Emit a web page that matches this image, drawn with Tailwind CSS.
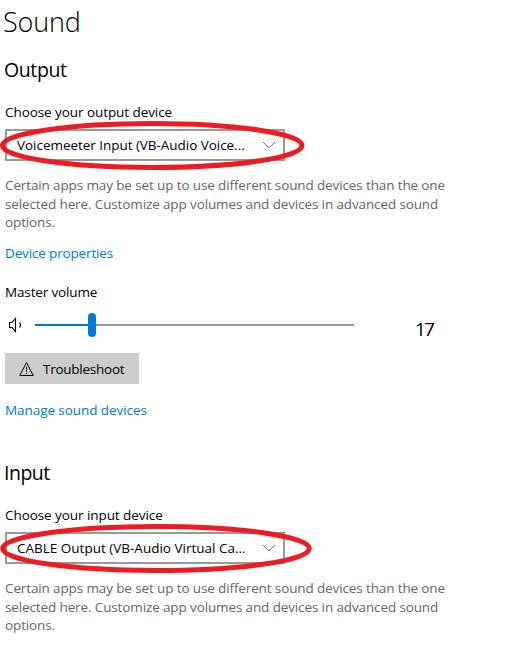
<!DOCTYPE html>
<html lang="en">
<head>
  <meta charset="UTF-8" />
  <meta name="viewport" content="width=device-width, initial-scale=1" />
  <title>Sound</title>
  <script src="https://cdn.jsdelivr.net/npm/@tailwindcss/browser@4"></script>
</head>
<body class="bg-white text-black overflow-hidden font-['Open_Sans','Noto_Sans',sans-serif] text-[13.5px] leading-5 tracking-[-0.07px]">
  <main class="w-[519px] h-[645px] pl-[5px] pt-[2px] flex flex-col items-start whitespace-nowrap">
    <h1 class="-ml-0.5 h-10 text-[27px] leading-10 font-light tracking-[-0.2px]">Sound</h1>

    <section class="mt-[14px]">
      <h2 class="-ml-px text-[19.5px] leading-7 tracking-[-0.4px]">Output</h2>
      <p class="mt-[18px]">Choose your output device</p>
      <div class="relative mt-[7px] w-[280px] h-8 border-2 border-[#999] flex items-center justify-between pl-[10px] pr-[7px]">
        <span class="tracking-[-0.04px]">Voicemeeter Input (VB-Audio Voice...</span>
        <svg class="w-3.5 h-2" viewBox="0 0 14 8" fill="none" stroke="#777"><path d="M1 1l6 6 6-6" /></svg>
        <!-- red marker -->
        <svg class="absolute -left-[7px] -top-[10px] w-[310px] h-[52px]" viewBox="0 0 310 52" fill="none" stroke="#ed1c24" stroke-width="5">
          <ellipse cx="152.2" cy="24.5" rx="149.8" ry="22" />
        </svg>
      </div>
      <p class="mt-[15px] leading-[18.67px] tracking-[-0.125px] text-[#666]">Certain apps may be set up to use different sound devices than the one<br />selected here. Customize app volumes and devices in advanced sound<br />options.</p>
      <a class="mt-[11px] block tracking-[-0.15px] text-[#0078d7]">Device properties</a>

      <p class="mt-[19px] tracking-[-0.15px]">Master volume</p>
      <div class="mt-[7px] h-8 flex items-center">
        <svg class="ml-[3px] w-4 h-4" viewBox="0 0 16 16" fill="none" stroke="#000" stroke-width="1.1">
          <path d="M1.5 5.5h2.5L7.5 1.5v13L4 10.5H1.5z" />
          <path d="M11.5 5.5q2 2.5 0 5" />
        </svg>
        <div class="ml-[11px] w-[319px] flex items-center">
          <div class="w-[53px] h-0.5 bg-[#0078d7]"></div>
          <div class="w-2 h-6 rounded-full bg-[#0078d7]"></div>
          <div class="flex-1 h-0.5 bg-[#999]"></div>
        </div>
        <span class="ml-[61px] mt-[7px] text-[19px] tracking-[-1.8px]">17</span>
      </div>
      <button class="mt-3 w-[134px] h-[31px] bg-[#ccc] flex items-center pl-[14px]">
        <svg class="w-4 h-4" viewBox="0 0 16 16" fill="none" stroke="#000"><path d="M7.5 1.5L.8 14.5h13.4zM7.5 6v5M7.5 12v1" /></svg>
        <span class="ml-2 tracking-[-0.25px]">Troubleshoot</span>
      </button>
      <a class="mt-4 block text-[#0078d7]">Manage sound devices</a>
    </section>

    <section class="mt-[39px]">
      <h2 class="-ml-px text-[19.5px] leading-7 tracking-[-0.5px]">Input</h2>
      <p class="mt-[18px]">Choose your input device</p>
      <div class="relative mt-[7px] w-[280px] h-8 border-2 border-[#999] flex items-center justify-between pl-[10px] pr-[7px]">
        <span class="tracking-normal">CABLE Output (VB-Audio Virtual Ca...</span>
        <svg class="w-3.5 h-2" viewBox="0 0 14 8" fill="none" stroke="#777"><path d="M1 1l6 6 6-6" /></svg>
        <!-- red marker -->
        <svg class="absolute -left-[7px] -top-[10px] w-[318px] h-[52px]" viewBox="0 0 318 52" fill="none" stroke="#ed1c24" stroke-width="5">
          <ellipse cx="156" cy="24.5" rx="153.3" ry="22" />
        </svg>
      </div>
      <p class="mt-[15px] leading-[18.67px] tracking-[-0.125px] text-[#666]">Certain apps may be set up to use different sound devices than the one<br />selected here. Customize app volumes and devices in advanced sound<br />options.</p>
    </section>
  </main>
</body>
</html>
